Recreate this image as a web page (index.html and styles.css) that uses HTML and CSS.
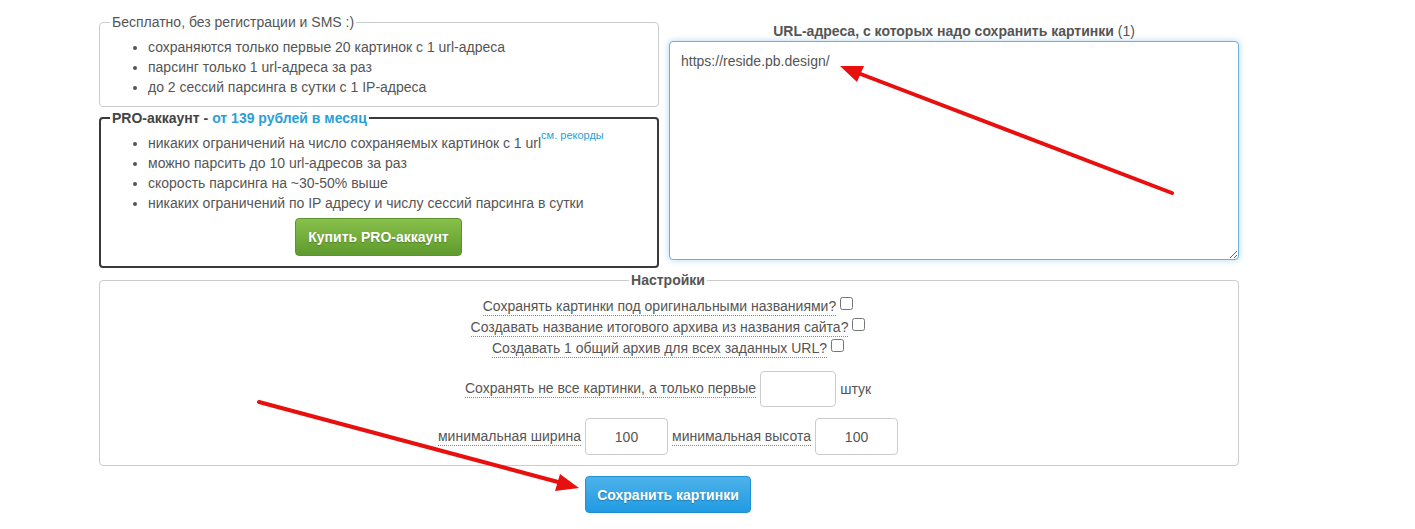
FILE: index.html
```html
<!DOCTYPE html>
<html>
<head>
    <meta charset="utf-8">
    <title>Сохранить картинки с сайта</title>
    <link rel="stylesheet" href="styles.css">
</head>
<body>

<div class="page">
    <div class="top_row">
        <div class="left_col">
            <fieldset class="free_box">
                <legend>Бесплатно, без регистрации и SMS :)</legend>
                <ul>
                    <li>сохраняются только первые 20 картинок с 1 url-адреса</li>
                    <li>парсинг только 1 url-адреса за раз</li>
                    <li>до 2 сессий парсинга в сутки с 1 IP-адреса</li>
                </ul>
            </fieldset>

            <fieldset class="pro_box">
                <legend><b>PRO-аккаунт - </b><a href="#" class="price">от 139 рублей в месяц</a></legend>
                <ul>
                    <li>никаких ограничений на число сохраняемых картинок с 1 url<a href="#" class="records">см. рекорды</a></li>
                    <li>можно парсить до 10 url-адресов за раз</li>
                    <li>скорость парсинга на ~30-50% выше</li>
                    <li>никаких ограничений по IP адресу и числу сессий парсинга в сутки</li>
                </ul>
                <div class="btn_line">
                    <button class="btn btn_green">Купить PRO-аккаунт</button>
                </div>
            </fieldset>
        </div>

        <div class="right_col">
            <div class="urls_title"><b>URL-адреса, с которых надо сохранить картинки</b> (1)</div>
            <textarea class="urls">https://reside.pb.design/</textarea>
        </div>
    </div>

    <fieldset class="settings">
        <legend>Настройки</legend>
        <div class="opt_row">
            <span class="hint">Сохранять картинки под оригинальными названиями?</span>
            <input type="checkbox">
        </div>
        <div class="opt_row">
            <span class="hint">Создавать название итогового архива из названия сайта?</span>
            <input type="checkbox">
        </div>
        <div class="opt_row">
            <span class="hint">Создавать 1 общий архив для всех заданных URL?</span>
            <input type="checkbox">
        </div>
        <div class="field_row first_n">
            <span class="hint">Сохранять не все картинки, а только первые</span>
            <input type="text" class="num num_first" value="">
            <span>штук</span>
        </div>
        <div class="field_row min_size">
            <span class="hint">минимальная ширина</span>
            <input type="text" class="num" value="100">
            <span class="hint">минимальная высота</span>
            <input type="text" class="num" value="100">
        </div>
    </fieldset>

    <div class="btn_line save_line">
        <button class="btn btn_blue">Сохранить картинки</button>
    </div>
</div>

<!-- red arrows drawn over the screenshot -->
<svg class="arrows" width="1415" height="529" viewBox="0 0 1415 529">
    <line x1="1172" y1="193" x2="858" y2="73" stroke="#e8100f" stroke-width="4" stroke-linecap="round"/>
    <polygon points="840,66 864,66 857,82" fill="#e8100f"/>
    <line x1="259" y1="402" x2="558" y2="482" stroke="#e8100f" stroke-width="4" stroke-linecap="round"/>
    <polygon points="579,488 555,491 560,474" fill="#e8100f"/>
</svg>

</body>
</html>
```

FILE: styles.css
```css
BODY {
    margin: 0;
    font-family: "Liberation Sans", Arial, sans-serif;
    font-size: 14px;
    line-height: 20px;
    color: #555;
    background: #fff;
}

A {
    color: #2a9fd6;
    text-decoration: none;
}

.page {
    width: 1140px;
    margin-left: 99px;
    padding-top: 12px;
}

.top_row {
    display: grid;
    grid-template-columns: 560px 570px;
    column-gap: 10px;
}

FIELDSET {
    margin: 0;
    padding: 5px 10px 9px 10px;
    border: 1px solid #ccc;
    border-radius: 4px;
    min-width: 0;
}

LEGEND {
    padding: 0 2px;
    line-height: 20px;
}

UL {
    margin: 0;
    padding-left: 38px;
}

LI {
    line-height: 20px;
}

.pro_box {
    margin-top: 1px;
    border: 2px solid #3a3a3a;
    padding-bottom: 10px;
    padding-left: 9px;
}

.pro_box LEGEND b {
    color: #444;
}

.price {
    font-weight: bold;
}

.records {
    font-size: 11px;
    line-height: 0;
    vertical-align: 9px;
}

.btn_line {
    display: flex;
    justify-content: center;
}

.pro_box .btn_line {
    margin-top: 5px;
}

.btn {
    font-family: "Liberation Sans", Arial, sans-serif;
    font-size: 14px;
    font-weight: bold;
    color: #fff;
    border-radius: 4px;
    cursor: pointer;
    text-shadow: 0 1px 1px rgba(0, 0, 0, .25);
}

.btn_green {
    width: 167px;
    height: 38px;
    border: 1px solid #5b9428;
    background: linear-gradient(#88c04b, #5e9a2d);
}

.urls_title {
    text-align: center;
    line-height: 20px;
    margin-top: 9px;
}

.urls {
    display: block;
    box-sizing: border-box;
    width: 570px;
    height: 219px;
    margin: 0;
    padding: 9px 11px;
    font-family: "Liberation Sans", Arial, sans-serif;
    font-size: 14px;
    line-height: 20px;
    color: #555;
    border: 1px solid #66afe9;
    border-radius: 4px;
    box-shadow: 0 0 6px rgba(102, 175, 233, .5);
    outline: none;
    resize: vertical;
}

.settings {
    margin-top: 2px;
    padding: 6px 12px 10px 10px;
}

.settings LEGEND {
    margin: 0 auto;
    font-weight: bold;
}

.hint {
    border-bottom: 1px dotted #888;
    line-height: 17px;
}

.opt_row {
    display: flex;
    justify-content: center;
    align-items: center;
    height: 21px;
    gap: 4px;
}

.opt_row INPUT {
    width: 13px;
    height: 13px;
    margin: 0 0 6px 0;
}

.field_row {
    display: flex;
    justify-content: center;
    align-items: center;
    gap: 4px;
}

.first_n {
    margin-top: 12px;
}

.min_size {
    margin-top: 11px;
}

.num {
    box-sizing: border-box;
    width: 83px;
    height: 37px;
    margin: 0;
    padding: 6px;
    font-family: "Liberation Sans", Arial, sans-serif;
    font-size: 14px;
    color: #555;
    text-align: center;
    border: 1px solid #ccc;
    border-radius: 4px;
}

.num_first {
    width: 76px;
    height: 36px;
}

.save_line {
    margin-top: 10px;
    padding-right: 2px;
}

.btn_blue {
    width: 166px;
    height: 37px;
    border: 1px solid #1f8fd6;
    background: linear-gradient(#4db2ea, #219be3);
}

.arrows {
    position: absolute;
    left: 0;
    top: 0;
    pointer-events: none;
}
```
